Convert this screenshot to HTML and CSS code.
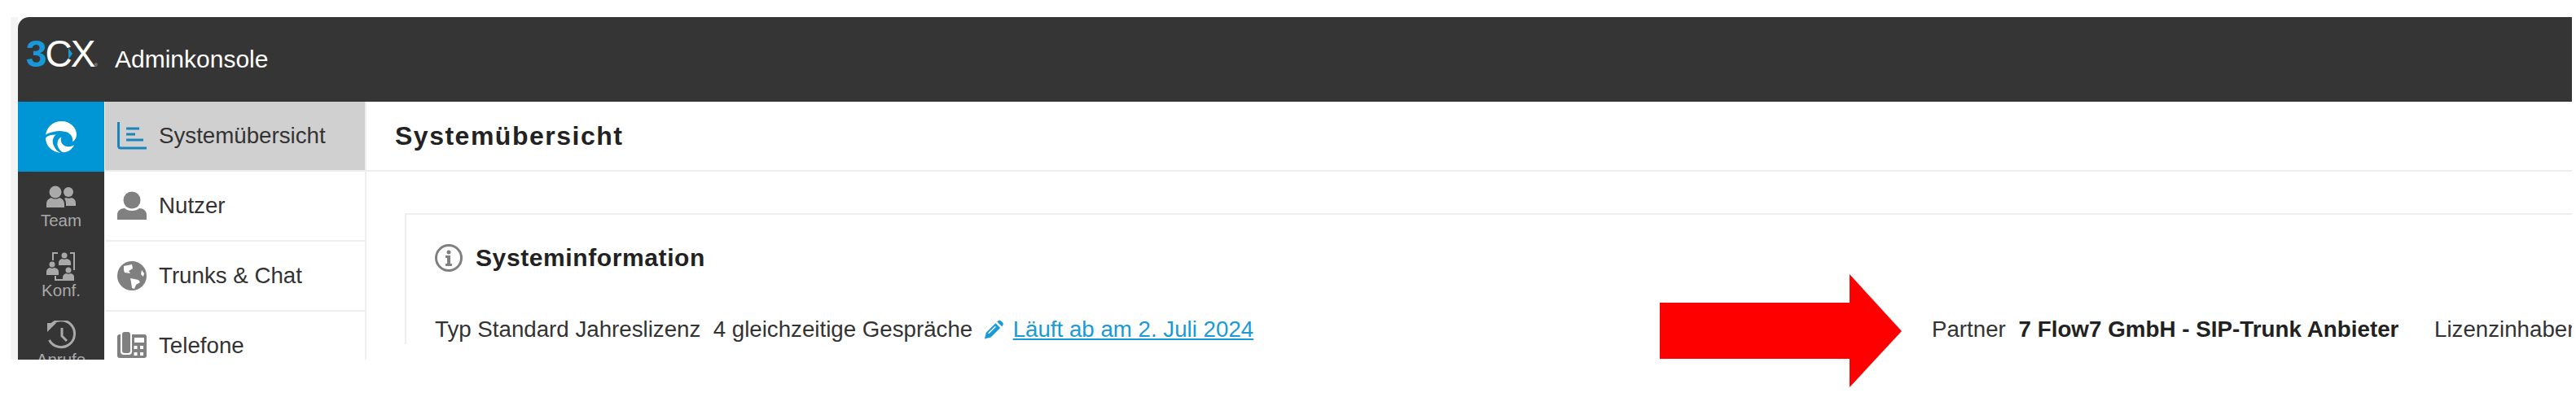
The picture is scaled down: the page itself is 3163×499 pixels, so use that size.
FILE: index.html
```html
<!DOCTYPE html>
<html lang="de">
<head>
    <meta charset="UTF-8">
    <meta name="viewport" content="width=device-width, initial-scale=1.0">
    <title>3CX Adminkonsole</title>
    <link rel="stylesheet" href="styles.css">
</head>
<body>
    <div class="page">
        <div class="window">
            <header class="topbar">
                <div class="logo">
                    <span class="logo-three">3</span><span class="logo-cx">CX</span><span class="logo-reg">®</span>
                    <span class="logo-tri"></span>
                </div>
                <div class="app-name">Adminkonsole</div>
            </header>
            <div class="main">
                <aside class="rail">
                    <div class="rail-home">
                        <svg width="39" height="39" viewBox="0 0 40 40" fill="#fff">
                            <path d="M0 17C2 7 9 0 20 0c11 0 19 8 19 17 0 4-2 7-5 9 1-6-3-12-10-13-4-1-9-1-13 0-4 1-8 2-11 4z"/>
                            <path d="M13 17c-5 4-5 11-2 15 1 3 4 6 8 8C8 39 0 31 0 21c3-3 8-4 13-4z"/>
                            <path d="M20 20c-2 4 0 9 4 11 4 2 8 1 12-1-3 6-9 10-15 9-4-3-7-8-6-12 0-3 2-6 5-7z"/>
                        </svg>
                    </div>
                    <div class="rail-item">
                        <svg width="36" height="36" viewBox="0 0 36 36" fill="#a9a9a9">
                            <circle cx="11" cy="13" r="7.500"/>
                            <circle cx="27" cy="13" r="6"/>
                            <path d="M0 32v-4c0-5 3-7 6-8 3 2 7 2 10 0 3 1 6 3 6 8v4z"/>
                            <path d="M24 20c2 1 5 1 7 0 3 1 5 3 5 7v3H24c0-4 0-7-2-9z"/>
                        </svg>
                        <span>Team</span>
                    </div>
                    <div class="rail-item">
                        <svg width="36" height="36" viewBox="0 0 36 36" fill="#a9a9a9">
                            <path d="M7 11V1h7v2H9v8zM29 1h6v22h-2V3h-4zM10 30h2v4h8v2H10z"/>
                            <circle cx="22" cy="5" r="3.500"/><path d="M15 17v-3c0-3 2-4 4-5 2 1 4 1 6 0 3 1 5 2 5 5v3z"/>
                            <circle cx="7" cy="16" r="3.500"/><path d="M0 29v-4c0-3 2-4 4-5 2 1 4 1 6 0 3 1 5 2 5 5v4z"/>
                            <circle cx="27" cy="23" r="3.500"/><path d="M20 36v-4c0-3 2-4 4-5 2 1 4 1 6 0 3 1 4 2 4 5v4z"/>
                        </svg>
                        <span>Konf.</span>
                    </div>
                    <div class="rail-item">
                        <svg width="36" height="36" viewBox="0 0 36 36" fill="none" stroke="#a9a9a9" stroke-width="3">
                            <path d="M5 6a16.500 16.500 0 1 1-1.500 18"/>
                            <path d="M19 9v10l6 6"/>
                            <path fill="#a9a9a9" stroke="none" d="M1 3l11 0-11 11z"/>
                        </svg>
                        <span>Anrufe</span>
                    </div>
                </aside>
                <nav class="subnav">
                    <div class="subnav-row active">
                        <svg width="36" height="34" viewBox="0 0 36 34" fill="none" stroke="#1a84bd" stroke-width="3">
                            <path d="M1.500 0v29c0 2 1 3 3 3H36"/>
                            <path d="M11 8h16M11 15h11M11 22h21"/>
                        </svg>
                        <span>Systemübersicht</span>
                    </div>
                    <div class="subnav-row">
                        <svg width="36" height="36" viewBox="0 0 36 36" fill="#808080">
                            <circle cx="18" cy="11" r="10.500"/>
                            <path d="M0 35v-6c0-5 4-8 9-8 2 2 5 3 9 3s7-1 9-3c5 0 9 3 9 8v6z"/>
                        </svg>
                        <span>Nutzer</span>
                    </div>
                    <div class="subnav-row">
                        <svg width="36" height="36" viewBox="0 0 36 36">
                            <circle cx="18" cy="18" r="18" fill="#808080"/>
                            <path fill="#fff" d="M8 6l10-2 1 5-5 3 2 3-7-1-1-3zM16 21l10 2 2 3-5 3-2 5-3-1-1-7zM30 11l3 4-1 4-3-3z"/>
                        </svg>
                        <span>Trunks &amp; Chat</span>
                    </div>
                    <div class="subnav-row">
                        <svg width="36" height="34" viewBox="0 0 36 34">
                            <rect y="3" width="36" height="29" rx="3" fill="#808080"/>
                            <rect x="4" y="-2" width="14" height="30" rx="4" fill="#fff"/>
                            <rect x="6" width="10" height="26" rx="3" fill="#808080"/>
                            <rect x="21" y="7" width="12" height="6" fill="#fff"/>
                            <path fill="#fff" d="M20.500 17h4v4h-4zM28 17h4v4h-4zM20.500 25h4v4h-4zM28 25h4v4h-4z"/>
                        </svg>
                        <span>Telefone</span>
                    </div>
                </nav>
                <main class="content">
                    <h1 class="content-head">Systemübersicht</h1>
                    <section class="card">
                        <h2 class="card-title">
                            <svg width="34" height="34" viewBox="0 0 34 34">
                                <circle cx="17" cy="17" r="15.500" fill="none" stroke="#808080" stroke-width="3"/>
                                <circle cx="17" cy="10" r="2.500" fill="#808080"/>
                                <path fill="#808080" d="M13 14h6v10h2v3h-8v-3h2v-7h-2z"/>
                            </svg>
                            Systeminformation
                        </h2>
                        <div class="info-row">
                            <div class="license">
                                Typ Standard Jahreslizenz&nbsp; 4 gleichzeitige Gespräche
                                <svg class="pencil" width="25" height="26" viewBox="0 0 26 26" fill="#1a9ad6">
                                    <path d="M1 25l2-8L15 5l6 6L9 23z"/>
                                    <path d="M17 3l1-1c1-1 3-1 4 0l2 2c1 1 1 3 0 4l-1 1z"/>
                                    <path d="M6 18l9-9" stroke="#fff" stroke-width="1.500"/>
                                </svg>
                                <a class="expires" href="#">Läuft ab am 2. Juli 2024</a>
                            </div>
                            <div class="partner">Partner <b>7 Flow7 GmbH - SIP-Trunk Anbieter</b></div>
                            <div class="holder">Lizenzinhaber</div>
                        </div>
                    </section>
                </main>
            </div>
        </div>
        <svg class="arrow" width="297" height="139" viewBox="0 0 297 139">
            <path fill="#ff0000" d="M0 35h233V0l64 70-64 69v-35H0z"/>
        </svg>
    </div>
</body>
</html>
```

FILE: styles.css
```css
body {
    margin: 0;
    background: #fff;
    font-family: "Liberation Sans", Arial, sans-serif;
    color: #333;
}
.page {
    position: relative;
    height: 499px;
    overflow: hidden;
    padding: 21px 0 0 13px;
    box-sizing: border-box;
}
.window {
    width: 3145px;
    height: 421px;
    box-sizing: border-box;
    border-left: 9px solid #f4f4f4;
    overflow: hidden;
    display: flex;
    flex-direction: column;
}
.topbar {
    height: 104px;
    flex-shrink: 0;
    background: #353535;
    border-top-left-radius: 14px;
    display: flex;
    align-items: center;
    padding-left: 10px;
}
.logo {
    position: relative;
    width: 109px;
    font-size: 46px;
    line-height: 46px;
    letter-spacing: -2px;
    white-space: nowrap;
}
.logo-three {
    color: #1798d8;
    font-weight: bold;
}
.logo-cx {
    color: #fff;
}
.logo-reg {
    color: #ccc;
    font-size: 6px;
    letter-spacing: 0;
}
.logo-tri {
    position: absolute;
    left: 52px;
    top: 16px;
    border-left: 5px solid #1798d8;
    border-top: 7px solid transparent;
    border-bottom: 7px solid transparent;
}
.app-name {
    color: #fff;
    font-size: 30px;
}
.main {
    flex: 1;
    display: flex;
    min-height: 0;
}
.rail {
    width: 106px;
    flex-shrink: 0;
    background: #353535;
}
.rail-home {
    height: 86px;
    background: #0096d6;
    display: flex;
    align-items: center;
    justify-content: center;
}
.rail-item {
    height: 85.6px;
    box-sizing: border-box;
    padding-top: 12px;
    display: flex;
    flex-direction: column;
    align-items: center;
    color: #a9a9a9;
    font-size: 20.5px;
    line-height: 24px;
}
.subnav {
    width: 321px;
    margin-left: 1px;
    flex-shrink: 0;
    box-sizing: border-box;
    border-right: 2px solid #eee;
}
.subnav-row {
    height: 86px;
    box-sizing: border-box;
    border-bottom: 2px solid #eee;
    display: flex;
    align-items: center;
    gap: 15px;
    padding-left: 15px;
    font-size: 27.7px;
}
.subnav-row.active {
    background: #d0d0d0;
}
.content {
    flex: 1;
    min-width: 0;
}
.content-head {
    height: 86px;
    box-sizing: border-box;
    margin: 0;
    padding-left: 35px;
    border-bottom: 2px solid #eee;
    display: flex;
    align-items: center;
    font-size: 32px;
    letter-spacing: 1.5px;
    color: #222;
}
.card {
    margin: 51px 0 0 47px;
    border-top: 2px solid #eee;
    border-left: 2px solid #eee;
    padding: 36px 0 0 35px;
}
.card-title {
    margin: 0;
    display: flex;
    align-items: center;
    gap: 16px;
    height: 34px;
    font-size: 30px;
    letter-spacing: 0.6px;
    color: #222;
}
.info-row {
    margin-top: 53px;
    display: flex;
    align-items: center;
    font-size: 27.7px;
    white-space: nowrap;
    line-height: 36px;
}
.license {
    width: 1838px;
    flex-shrink: 0;
}
.pencil {
    margin: 0 3px 0 6px;
    vertical-align: -4px;
}
.expires {
    color: #1a9ad6;
}
.partner {
    width: 617px;
    flex-shrink: 0;
}
.partner b {
    margin-left: 8px;
    font-size: 27.8px;
    color: #222;
}
.arrow {
    position: absolute;
    left: 2038px;
    top: 337px;
}
```
